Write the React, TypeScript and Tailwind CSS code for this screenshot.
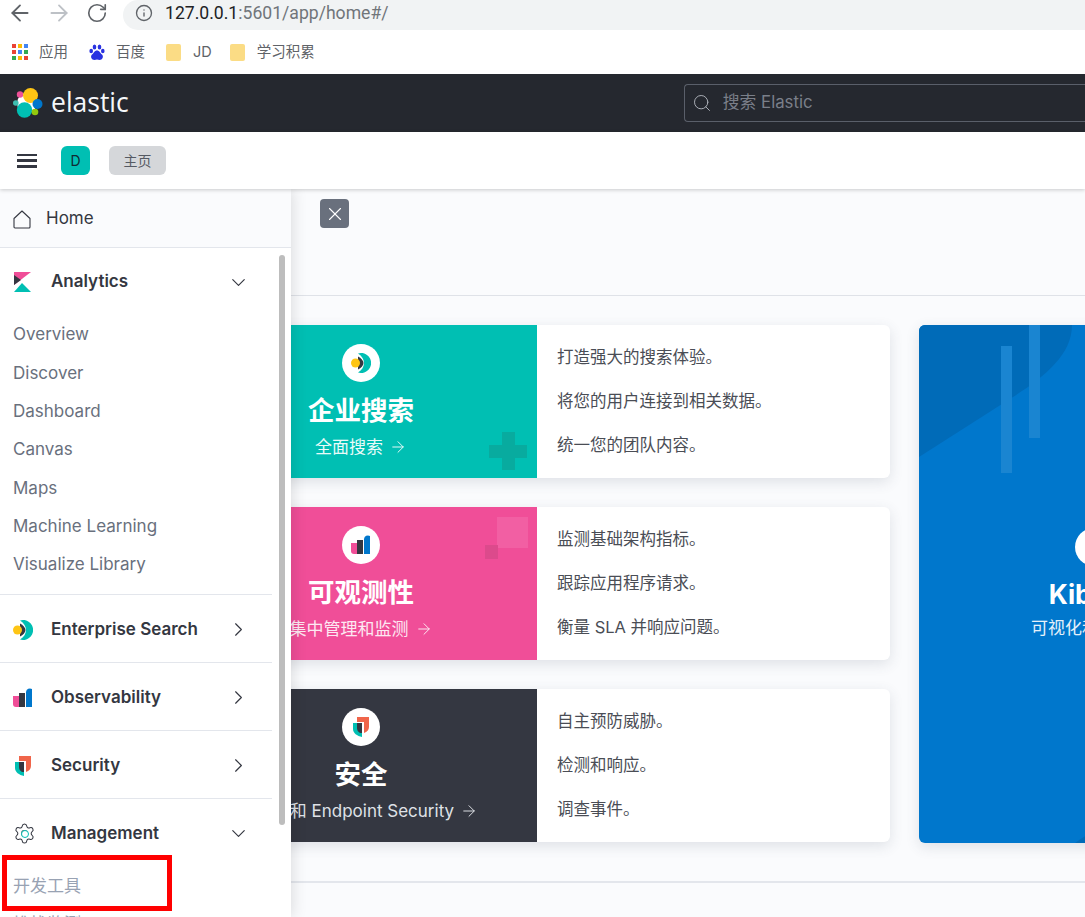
import { ArrowLeft, ArrowRight, ChevronDown, ChevronRight, Info, RotateCw, Search, Settings, X } from "lucide-react";

const FONT = "[font-family:Inter,'Noto_Sans_CJK_SC',sans-serif]";

const ANALYTICS = ["Overview", "Discover", "Dashboard", "Canvas", "Maps", "Machine Learning", "Visualize Library"];

function ElasticLogo({ size = 30 }: { size?: number }) {
  return (
    <svg width={size} height={size} viewBox="0 0 30 30">
      <circle cx="14" cy="15" r="10" fill="#fff" />
      <circle cx="2.800" cy="15" r="2.800" fill="#3ebeb0" />
      <circle cx="7" cy="6.500" r="3.200" fill="#ee5097" />
      <circle cx="17.500" cy="7.500" r="7.500" fill="#fec514" />
      <circle cx="24.500" cy="16" r="5" fill="#0077cc" />
      <circle cx="11.500" cy="22" r="7.700" fill="#00bfb3" />
      <circle cx="22" cy="24" r="3.300" fill="#93c90e" />
    </svg>
  );
}

function HomeIcon() {
  return (
    <svg width="18" height="19" viewBox="0 0 18 19" fill="none" stroke="#343741" strokeWidth="1.100" strokeLinejoin="round">
      <path d="M1 8.500L9 1l8 7.500V17a1 1 0 0 1-1 1H2a1 1 0 0 1-1-1z" />
    </svg>
  );
}

function KibanaMark() {
  return (
    <svg width="18" height="20" viewBox="0 0 18 20">
      <path d="M1 0h17L1 13z" fill="#f04e98" />
      <path d="M1 3v10l7-5z" fill="#343741" />
      <path d="M1 20l8-9 9 9z" fill="#00bfb3" />
    </svg>
  );
}

function SearchMark({ size = 20 }: { size?: number }) {
  return (
    <svg width={size} height={size} viewBox="0 0 20 20">
      <path d="M7 .5A10 10 0 1 1 7 19.500C11 17 13 13.500 13 10S11 3 7 .5z" fill="#00bfb3" />
      <path d="M7 3.500C10 5 12.500 7.500 12.500 10S10 15 7 16.500z" fill="#343741" />
      <circle cx="4.500" cy="10" r="4.500" fill="#fec514" />
    </svg>
  );
}

function ObservabilityMark({ size = 20 }: { size?: number }) {
  return (
    <svg width={size} height={size} viewBox="0 0 20 20">
      <path d="M0 8h6v11H3a3 3 0 0 1-3-3z" fill="#f04e98" />
      <rect x="6" y="5" width="6" height="14" fill="#343741" />
      <path d="M13 4a4 4 0 0 1 6-3v18h-6z" fill="#0077cc" />
    </svg>
  );
}

function SecurityMark({ size = 20 }: { size?: number }) {
  return (
    <svg width={size} height={size} viewBox="0 0 20 20">
      <path d="M6 0h12v10c0 3-2 5-5 6V5H6z" fill="#f0654a" />
      <path d="M2 6h9v14C6 19 2 16 2 12z" fill="#00bfb3" />
      <path d="M6 6h5v10H9c-2-1-3-3-3-5z" fill="#343741" />
    </svg>
  );
}

function GearMark() {
  return (
    <div className="relative flex h-[23px] w-[23px] items-center justify-center">
      <Settings size={23} strokeWidth={1.100} className="text-[#343741]" />
      <div className="absolute h-[8px] w-[8px] rounded-full border-[1.500px] border-[#00bfb3] bg-white" />
    </div>
  );
}

function AppsGrid() {
  const colors = ["#ea4335", "#fbbc05", "#4285f4", "#ea4335", "#4285f4", "#34a853", "#34a853", "#fbbc05", "#ea4335"];
  return (
    <div className="grid h-4 w-4 grid-cols-3 gap-[2px]">
      {colors.map((c, i) => (
        <div key={i} className="h-1 w-1" style={{ backgroundColor: c }} />
      ))}
    </div>
  );
}

function BaiduPaw() {
  return (
    <svg width="16" height="17" viewBox="0 0 16 17" fill="#2932e1">
      <ellipse cx="2.200" cy="7" rx="1.800" ry="2.300" />
      <ellipse cx="5.500" cy="3" rx="1.800" ry="2.500" />
      <ellipse cx="10.500" cy="3" rx="1.800" ry="2.500" />
      <ellipse cx="13.800" cy="7" rx="1.800" ry="2.300" />
      <path d="M8 6.500c2.500 0 3 2.500 5 4 2 2 .5 5.500-2.500 5.500-1 0-1.500-.4-2.500-.4s-1.500.4-2.500.4C2.500 16 1 12.500 3 10.500c2-1.500 2.500-4 5-4z" />
    </svg>
  );
}

function Folder() {
  return <div className="h-[17px] w-[15px] rounded-[2px] bg-[#fbdc85]" />;
}

function Bookmark({ icon, label, gap }: { icon: React.ReactNode; label: string; gap: string }) {
  return (
    <div className={`flex items-center ${gap}`}>
      {icon}
      <span className="text-[14.500px] text-[#5f6368]">{label}</span>
    </div>
  );
}

function NavGroup({ icon, label, open, inset }: { icon: React.ReactNode; label: string; open?: boolean; inset: string }) {
  return (
    <div className={`flex h-full items-center pl-[13px] pt-[2px] ${inset}`}>
      <div className="flex w-[38px] items-center">{icon}</div>
      <span className="flex-1 text-[17px] font-semibold text-[#343741]">{label}</span>
      {open ? (
        <ChevronDown size={23} strokeWidth={1.200} className="text-[#343741]" />
      ) : (
        <ChevronRight size={23} strokeWidth={1.200} className="text-[#343741]" />
      )}
    </div>
  );
}

function Sidebar() {
  return (
    <aside className="absolute left-0 top-[189px] z-10 h-[728px] w-[291px] overflow-hidden bg-white shadow-[2px_0_14px_rgba(0,0,0,0.12)]">
      <div className="flex h-[59px] items-center gap-[15px] border-b border-[#e3e6ec] bg-[#fafbfd] pl-[13px] pt-[2px]">
        <HomeIcon />
        <span className="text-[17px] text-[#343741]">Home</span>
      </div>
      <div className="h-[66px]">
        <NavGroup icon={<KibanaMark />} label="Analytics" open inset="pr-[41px]" />
      </div>
      <div className="mt-[2px] flex flex-col pl-[13px]">
        {ANALYTICS.map((item) => (
          <div key={item} className="flex h-[38.330px] items-center text-[17px] text-[#69707d]">
            {item}
          </div>
        ))}
      </div>
      <div className="mt-[10px] mr-[19px] h-[68px] border-t border-[#e3e6ec]">
        <NavGroup icon={<SearchMark />} label="Enterprise Search" inset="pr-[22px]" />
      </div>
      <div className="mr-[19px] h-[68px] border-t border-[#e3e6ec]">
        <NavGroup icon={<ObservabilityMark />} label="Observability" inset="pr-[22px]" />
      </div>
      <div className="mr-[19px] h-[68px] border-t border-[#e3e6ec]">
        <NavGroup icon={<SecurityMark />} label="Security" inset="pr-[22px]" />
      </div>
      <div className="mr-[19px] h-[68px] border-t border-[#e3e6ec]">
        <NavGroup icon={<GearMark />} label="Management" open inset="pr-[22px]" />
      </div>
      <div className="pl-[13px] text-[17px] text-[#98a2b3]">
        <div className="mt-[1px] flex h-[38px] items-center">开发工具</div>
        <div className="flex h-[38px] items-center">堆栈监测</div>
      </div>
      <div className="absolute left-[279px] top-[66px] h-[570px] w-[6px] rounded-full bg-[#bdbdbd]" />
      <div className="absolute left-[2px] top-[666px] h-[56px] w-[170px] border-[5px] border-[#ff0000]" />
    </aside>
  );
}

function SolutionCard({
  color,
  icon,
  title,
  link,
  lines,
  decoration,
  subClass,
}: {
  color: string;
  icon: React.ReactNode;
  title: string;
  link: string;
  lines: string[];
  decoration?: React.ReactNode;
  subClass: string;
}) {
  return (
    <div className="flex h-[153px] overflow-hidden rounded-md bg-white shadow-[0_4px_14px_rgba(60,70,90,0.14)]">
      <div className={`relative flex w-[352px] flex-col items-center pt-[19px] ${color}`}>
        {decoration}
        <div className="flex h-[38px] w-[38px] items-center justify-center rounded-full bg-white">{icon}</div>
        <div className="mt-[9px] text-[26.500px] leading-[38px] font-bold text-white">{title}</div>
        <div className={`mt-[6px] flex items-center gap-[6px] text-[17px] leading-[24px] whitespace-nowrap ${subClass}`}>
          {link}
          <ArrowRight size={18} strokeWidth={1.300} />
        </div>
      </div>
      <div className="flex flex-1 flex-col justify-center gap-[20px] pb-[2px] pl-[20px] text-[16.500px] leading-[24px] text-[#4a4d55]">
        {lines.map((line) => (
          <div key={line}>{line}</div>
        ))}
      </div>
    </div>
  );
}

export default function App() {
  return (
    <div className={`relative h-[917px] w-[1085px] overflow-hidden bg-[#fafbfd] ${FONT}`}>
      {/* browser chrome */}
      <div className="flex h-[30px] items-center bg-white">
        <div className="flex w-[123px] items-center gap-[13px] pb-[4px] pl-[7px] text-[#5f6368]">
          <ArrowLeft size={26} strokeWidth={1.700} />
          <ArrowRight size={26} strokeWidth={1.700} className="text-[#bdc1c6]" />
          <RotateCw size={22} strokeWidth={1.800} className="ml-[1px]" />
        </div>
        <div className="flex h-[30px] flex-1 items-center rounded-l-full bg-[#f1f3f4] pb-[4px] pl-[12px]">
          <Info size={18} strokeWidth={1.800} className="text-[#5f6368]" />
          <span className="ml-[12px] [font-family:Roboto,sans-serif] text-[17.600px] text-[#70757a]">
            <span className="text-[#202124]">127.0.0.1</span>:5601/app/home#/
          </span>
        </div>
      </div>
      <div className="flex h-[44px] items-center gap-[21px] bg-white pl-[12px]">
        <Bookmark icon={<AppsGrid />} label="应用" gap="gap-[11px]" />
        <Bookmark icon={<BaiduPaw />} label="百度" gap="gap-[11px]" />
        <Bookmark icon={<Folder />} label="JD" gap="gap-[12px]" />
        <Bookmark icon={<Folder />} label="学习积累" gap="-ml-[3px] gap-[12px]" />
      </div>

      {/* kibana header */}
      <header className="flex h-[58px] items-center bg-[#25282f] pl-[13px]">
        <ElasticLogo />
        <span className="mb-[2px] ml-[8px] [font-family:'Open_Sans',sans-serif] text-[26.500px] leading-none text-[#f5f7fa]">elastic</span>
        <div className="ml-[555px] flex h-[38px] flex-1 items-center gap-[11px] rounded-l-[4px] border border-r-0 border-[#5a5f6a] pl-[7px]">
          <Search size={20} strokeWidth={1.100} className="text-[#b4b8c0]" />
          <span className="text-[16.800px] text-[#7a7f89]">搜索 Elastic</span>
        </div>
      </header>
      <div className="relative z-20 flex h-[57px] items-center bg-white pl-[17px] shadow-[0_1px_4px_rgba(0,0,0,0.2)]">
        <div className="flex h-[14px] w-[20px] flex-col justify-between">
          <div className="h-[2.500px] bg-[#343741]" />
          <div className="h-[2.500px] bg-[#343741]" />
          <div className="h-[2.500px] bg-[#343741]" />
        </div>
        <div className="ml-[24px] flex h-[29px] w-[29px] items-center justify-center rounded-md bg-[#00bfb3] text-[14px] text-[#0f2a33]">D</div>
        <div className="ml-[19px] flex h-[29px] w-[57px] items-center justify-center rounded-md bg-[#d5d7da] text-[14px] text-[#555a63]">主页</div>
      </div>

      <Sidebar />

      {/* page behind the nav */}
      <main>
        <div className="h-[107px] border-b border-[#dfe2e8] pl-[320px] pt-[10px]">
          <div className="flex h-[29px] w-[29px] items-center justify-center rounded-[4px] bg-[#69707d]">
            <X size={22} strokeWidth={1.200} className="text-white" />
          </div>
        </div>
        <div className="flex h-[587px] gap-[29px] border-b-2 border-[#e3e6ec] pl-[185px] pt-[29px]">
          <div className="flex w-[705px] shrink-0 flex-col gap-[29px]">
            <SolutionCard
              color="bg-[#00bfb3]"
              icon={<SearchMark />}
              title="企业搜索"
              link="全面搜索"
              subClass="text-[#e8fbf9]"
              lines={["打造强大的搜索体验。", "将您的用户连接到相关数据。", "统一您的团队内容。"]}
              decoration={
                <>
                  <div className="absolute left-[317px] top-[107px] h-[38px] w-[13px] bg-[#08ab9f]" />
                  <div className="absolute left-[304px] top-[120px] h-[13px] w-[38px] bg-[#08ab9f]" />
                </>
              }
            />
            <SolutionCard
              color="bg-[#f04e98]"
              icon={<ObservabilityMark />}
              title="可观测性"
              link="集中管理和监测"
              subClass="text-[#fde8f2]"
              lines={["监测基础架构指标。", "跟踪应用程序请求。", "衡量 SLA 并响应问题。"]}
              decoration={
                <>
                  <div className="absolute left-[312px] top-[10px] h-[31px] w-[31px] bg-[#f25fa3]" />
                  <div className="absolute left-[300px] top-[38px] h-[14px] w-[13px] bg-[#dc4a8c]" />
                </>
              }
            />
            <SolutionCard
              color="bg-[#343741]"
              icon={<SecurityMark />}
              title="安全"
              link="SIEM 和 Endpoint Security"
              subClass="text-[#dfe1e6]"
              lines={["自主预防威胁。", "检测和响应。", "调查事件。"]}
            />
          </div>
          <div className="relative flex h-[518px] w-[350px] shrink-0 flex-col items-center overflow-hidden rounded-md bg-[#0077cc] pt-[203px] shadow-[0_4px_14px_rgba(60,70,90,0.14)]">
            <svg className="absolute left-0 top-0" width="350" height="518" viewBox="0 0 350 518">
              <path d="M0 132L94 72C125 52 153 30 153 0H0z" fill="#006bb8" />
              <rect x="82" y="21" width="11" height="127" fill="#1a85d1" />
              <rect x="110" y="0" width="11" height="113" fill="#1a85d1" />
              <path d="M156 518c8-6 20-14 40-18v18z" fill="#006bb8" />
            </svg>
            <div className="relative h-[38px] w-[38px] rounded-full bg-white" />
            <div className="relative mt-[9px] text-[26.500px] leading-[38px] font-bold text-white">Kibana</div>
            <div className="relative mt-[3px] flex items-center gap-[6px] text-[17px] leading-[24px] whitespace-nowrap text-[#e6f1fa]">
              可视化和分析
              <ArrowRight size={18} strokeWidth={1.300} />
            </div>
          </div>
        </div>
      </main>
    </div>
  );
}
